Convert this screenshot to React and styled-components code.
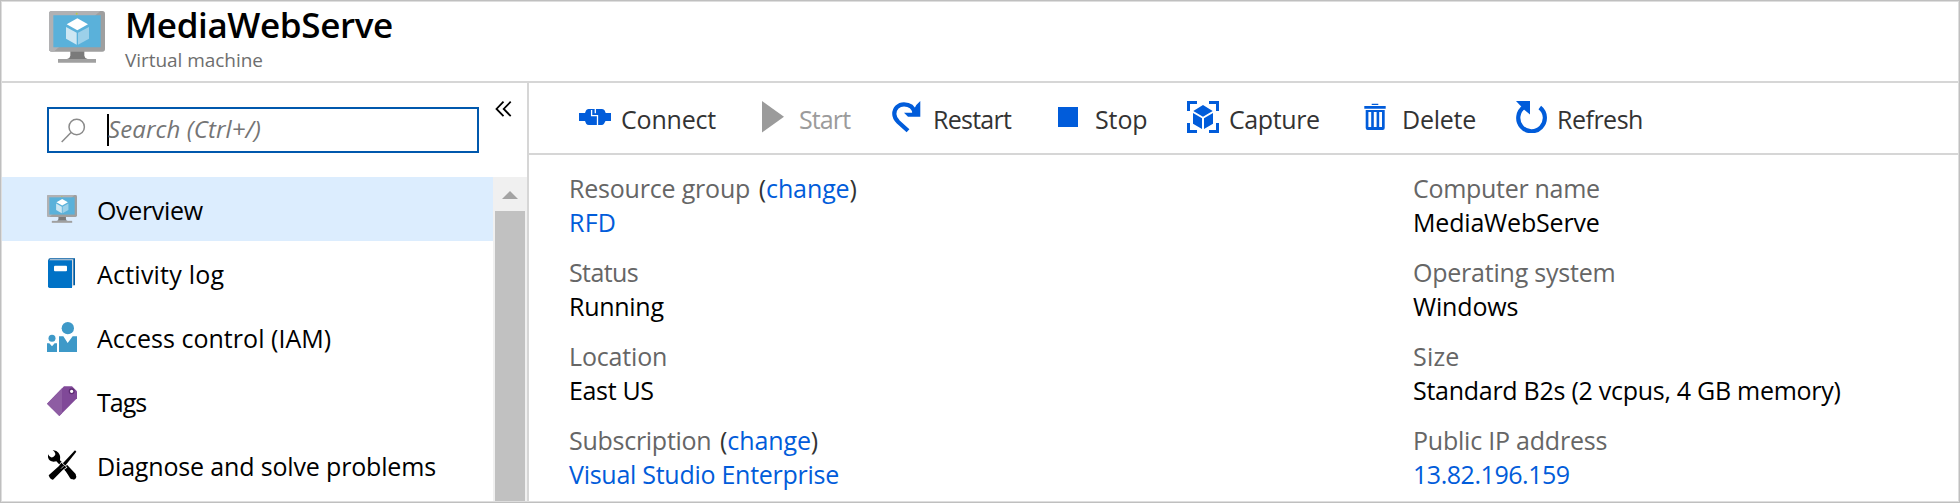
import React from 'react';
import styled, { createGlobalStyle } from 'styled-components';

const GlobalStyle = createGlobalStyle`
  *, *::before, *::after { box-sizing: border-box; }
  body { margin: 0; background: #fff; }
`;

const BLUE = '#015cda';
const LINE = '#d6d6d6';

const Frame = styled.div`
  display: flex;
  flex-direction: column;
  width: 1960px;
  height: 503px;
  overflow: hidden;
  border: 1px solid #bfbfbf;
  outline: 1px solid #dedede;
  outline-offset: -2px;
  padding: 1px;
  background: #fff;
  color: #000;
  font: 400 25px/34px "Open Sans", "Noto Sans", sans-serif;
  white-space: nowrap;
`;

const Text = styled.span`
  letter-spacing: ${(p) => p.$track || 0}px;
`;

const Header = styled.header`
  display: flex;
  align-items: flex-start;
  gap: 20px;
  flex: none;
  height: 81px;
  padding: 2px 0 0 47px;
  border-bottom: 2px solid ${LINE};
`;

const HeaderIcon = styled.div`
  margin-top: 7px;
  width: 56px;
  height: 52px;
`;

const Title = styled.h1`
  margin: 1px 0 0;
  font-size: 35px;
  font-weight: 600;
  line-height: 40px;
  letter-spacing: -0.38px;
`;

const Subtitle = styled.div`
  margin: 2px 0 0;
  color: #6e6e6e;
  font-size: 19px;
  line-height: 26px;
  letter-spacing: -0.05px;
`;

const Body = styled.div`
  display: flex;
  flex: 1;
  min-height: 0;
`;

const Sidebar = styled.aside`
  display: flex;
  flex-direction: column;
  width: 527px;
  border-right: 2px solid ${LINE};
`;

const SearchRow = styled.div`
  display: flex;
  align-items: flex-start;
  gap: 16px;
  flex: none;
  height: 94px;
  padding: 18px 0 0 45px;
`;

const SearchBox = styled.div`
  display: flex;
  align-items: center;
  width: 432px;
  height: 46px;
  margin-top: 6px;
  padding-left: 12px;
  border: 2px solid #0058ad;
`;

const Caret = styled.span`
  width: 2px;
  height: 32px;
  margin: 0 -1px 0 21px;
  background: #000;
`;

const Placeholder = styled.span`
  padding-bottom: 3px;
  color: #757575;
  font-size: 24px;
  font-style: italic;
  letter-spacing: 0.1px;
`;

const NavArea = styled.div`
  display: flex;
  flex: 1;
  min-height: 0;
`;

const NavList = styled.nav`
  flex: 1;
  overflow: hidden;
`;

const NavItem = styled.div`
  display: flex;
  align-items: center;
  gap: 20px;
  height: 64px;
  padding-left: 45px;
  background: ${(p) => (p.$active ? '#dcedfe' : 'transparent')};
  ${Text} { padding-top: 1px; }
`;

const Scrollbar = styled.div`
  display: flex;
  flex-direction: column;
  align-items: center;
  width: 34px;
  background: #f0f0f0;
`;

const ScrollArrow = styled.div`
  margin: 14px 0 12px;
  border: solid transparent;
  border-width: 0 8px 8px;
  border-bottom-color: #a3a3a3;
`;

const ScrollThumb = styled.div`
  flex: 1;
  width: 30px;
  margin-right: 1px;
  background: #c1c1c1;
`;

const Main = styled.main`
  flex: 1;
`;

const Toolbar = styled.div`
  display: grid;
  grid-template-columns: 178px 134px 162px 134px 173px 155px auto;
  align-items: start;
  height: 72px;
  padding: 18px 0 0 50px;
  border-bottom: 2px solid ${LINE};
`;

const ToolButton = styled.div`
  display: flex;
  gap: 10px;
  color: ${(p) => (p.$disabled ? '#9b9b9b' : '#333')};
  ${Text} { padding-top: 1px; }
`;

const Essentials = styled.div`
  display: grid;
  grid-template-columns: 844px auto;
  padding: 16px 0 0 40px;
`;

const Column = styled.div`
  display: flex;
  flex-direction: column;
  gap: 16px;
`;

const Label = styled.div`
  color: #666;
`;

const Paren = styled.span`
  margin-left: 2px;
  color: #333;
`;

const Link = styled.span`
  color: ${BLUE};
  letter-spacing: ${(p) => p.$track || 0}px;
`;

const Value = styled.div`
  color: ${(p) => (p.$link ? BLUE : '#000')};
`;

const Svg = styled.svg`
  display: block;
  flex: none;
`;

const VmIcon = ({ w, h }) => (
  <Svg width={w} height={h} viewBox="0 0 168 156" preserveAspectRatio="none">
    <path d="M64 120h42v14q1 8 10 10H54q9-2 10-10z" fill="#7a7a7a" />
    <path d="M27 144h114v11H27z" fill="#a0a0a0" />
    <rect width="168" height="122" rx="8" fill="#9f9f9f" />
    <path d="M8 0h146L14 122H8q-8 0-8-8V8q0-8 8-8z" fill="#b1b1b3" />
    <path d="M13 13h142v96H13z" fill="#5ab1da" />
    <circle cx="83" cy="8" r="3" fill="#b8c84a" />
    <path d="M85 22l32 18-32 18-32-18z" fill="#fff" />
    <path d="M51 48l32 17v36L51 83z" fill="#cde7f3" />
    <path d="M120 48L87 65v36l33-18z" fill="#9cd0e9" />
  </Svg>
);

const Icon90 = ({ children }) => (
  <Svg width="30" height="30" viewBox="0 0 90 90">{children}</Svg>
);

const LogIcon = () => (
  <Icon90>
    <path d="M9 1h75v81h-6V10H4V6q0-5 5-5z" fill="#005ba1" />
    <path d="M9 4h70v80l-6 4V9H6z" fill="#d5d9de" />
    <path d="M3 7h72v83H8q-5 0-5-5z" fill="#0072c6" />
    <rect x="21" y="23" width="39" height="17" rx="3" fill="#fff" />
  </Icon90>
);

const PeopleIcon = () => (
  <Icon90>
    <g fill="#3e99c8">
      <circle cx="62.5" cy="18.5" r="18.5" />
      <path d="M36 43h13l13 20 15-20h13v47H36z" />
      <circle cx="15" cy="49" r="10.5" />
      <path d="M0 64h7l8 9 8-9h7v26H0z" />
    </g>
  </Icon90>
);

const TagIcon = () => (
  <Icon90>
    <path d="M0 53L51 1h24l15 15v21L37 90z" fill="#804998" />
    <path d="M0 53L45 7v75l-8 8z" fill="#8e5da3" />
    <circle cx="74" cy="16" r="7" fill="#fff" stroke="#5f2c75" strokeWidth="4" />
  </Icon90>
);

const ToolsIcon = () => (
  <Icon90>
    <path d="M3 22q3 13 17 13l8-1 52 55q8-1 8-10L39 31q4-18-11-28l-11 -3q11 10 7 16-5 8-12 6-5-1-9-9z" />
    <path d="M50 53l10-9 26 28q3 9-6 15-8 2-11-3z" />
    <path d="M84 1l4 4-34 43-8-7z" stroke="#fff" strokeWidth="4" paintOrder="stroke" />
    <path d="M43 38l15 14-11 8L18 89q-8 1-13-13L36 48z" stroke="#fff" strokeWidth="4" paintOrder="stroke" />
    <path d="M42 56l9-9" stroke="#fff" strokeWidth="2" />
  </Icon90>
);

const Icon32 = ({ children }) => (
  <Svg width="32" height="32" viewBox="0 0 32 32" fill={BLUE}>{children}</Svg>
);

const ConnectIcon = () => (
  <Icon32>
    <path d="M0 12h6l1-2.500q.7-1.500 2.500-1.500h13.500q2 0 2.700 1.500l1 2.500H32v8h-5.500l-1.500 2.700q-.8 1.300-2.500 1.300H10q-2 0-2.800-1.300L6 20H0z" />
    <path d="M12.600 9v5.600h5.900V24M16.300 8v4.300" fill="none" stroke="#fff" strokeWidth="1.300" />
  </Icon32>
);

const StartIcon = () => (
  <Icon32><path d="M5 0l22 15.800L5 31.500z" fill="#9b9b9b" /></Icon32>
);

const RestartIcon = () => (
  <Icon32>
    <path d="M24 12C22.500 6 18 3.300 13 3.300 7.500 3.300 3.300 7.500 3.300 13c0 3.500 1.700 5.700 4 8l9.700 8.800" fill="none" stroke={BLUE} strokeWidth="4.200" />
    <path d="M25.300 4l4-4v15.700H17l-4-4h8z" />
  </Icon32>
);

const StopIcon = () => (
  <Icon32><path d="M5 6h20v20H5z" /></Icon32>
);

const CaptureIcon = () => (
  <Icon32>
    <path d="M0 0h10v3H3v7H0zM22 0h10v10h-3V3h-7zM0 22h3v7h7v3H0zM29 22h3v10H22v-3h7z" />
    <path d="M16 4l9.700 6-9.700 5.700L6.300 10zM6 12l9 5.300V28l-9-5.300zM26 12l-9 5.300V28l9-5.300z" />
  </Icon32>
);

const DeleteIcon = () => (
  <Icon32>
    <path d="M11.700 2.700h6.600V4h-6.600zM4.300 5h21.400v2.700H4.300z" />
    <path fillRule="evenodd" d="M5.700 9h19v18q0 2-2 2h-15q-2 0-2-2zM8.400 11v15h2.800V11zM13.800 11v15h2.800V11zM19.200 11v15H22V11z" />
  </Icon32>
);

const RefreshIcon = () => (
  <Icon32>
    <path d="M24.800 6.500A13.300 13.300 0 1 1 9 6" fill="none" stroke={BLUE} strokeWidth="4.200" />
    <path d="M1 0h14v13.500L9.500 9z" />
  </Icon32>
);

const SearchIcon = () => (
  <Svg width="25" height="25" viewBox="0 0 25 25" fill="none" stroke="#8a8a8a" strokeWidth="1.500">
    <circle cx="15.700" cy="9" r="7.700" />
    <path d="M10 14.500L.7 24" />
  </Svg>
);

const CollapseIcon = () => (
  <Svg width="17" height="16" viewBox="0 0 17 16" fill="none" stroke="#000" strokeWidth="1.800">
    <path d="M8.500 .7L1.500 7.900l7 7.200M15.700 .7l-7 7.200 7 7.200" />
  </Svg>
);

const nav = [
  ['Overview', -0.33, <VmIcon w="30" h="28" />],
  ['Activity log', 0.22, <LogIcon />],
  ['Access control (IAM)', 0.04, <PeopleIcon />],
  ['Tags', -1.0, <TagIcon />],
  ['Diagnose and solve problems', -0.16, <ToolsIcon />],
];

const tools = [
  ['Connect', -0.2, ConnectIcon],
  ['Start', -0.9, StartIcon],
  ['Restart', -0.74, RestartIcon],
  ['Stop', -0.1, StopIcon],
  ['Capture', -0.4, CaptureIcon],
  ['Delete', -0.25, DeleteIcon],
  ['Refresh', -0.5, RefreshIcon],
];

const columns = [
  [
    { label: 'Resource group', lt: -0.2, change: true, value: 'RFD', vt: 0.24, link: true },
    { label: 'Status', lt: -0.6, value: 'Running', vt: -0.28 },
    { label: 'Location', lt: -0.17, value: 'East US', vt: -0.34 },
    { label: 'Subscription', lt: -0.27, change: true, value: 'Visual Studio Enterprise', vt: -0.27, link: true },
  ],
  [
    { label: 'Computer name', lt: -0.3, value: 'MediaWebServe', vt: -0.18 },
    { label: 'Operating system', lt: -0.22, value: 'Windows', vt: -0.15 },
    { label: 'Size', lt: 0.19, value: 'Standard B2s (2 vcpus, 4 GB memory)', vt: -0.27 },
    { label: 'Public IP address', lt: -0.22, value: '13.82.196.159', vt: -0.46, link: true },
  ],
];

export default function App() {
  return (
    <Frame>
      <GlobalStyle />
      <Header>
        <HeaderIcon><VmIcon w="56" h="52" /></HeaderIcon>
        <div>
          <Title>MediaWebServe</Title>
          <Subtitle>Virtual machine</Subtitle>
        </div>
      </Header>
      <Body>
        <Sidebar>
          <SearchRow>
            <SearchBox>
              <SearchIcon />
              <Caret />
              <Placeholder>Search (Ctrl+/)</Placeholder>
            </SearchBox>
            <CollapseIcon />
          </SearchRow>
          <NavArea>
            <NavList>
              {nav.map(([label, track, icon], i) => (
                <NavItem key={label} $active={i === 0}>
                  {icon}
                  <Text $track={track}>{label}</Text>
                </NavItem>
              ))}
            </NavList>
            <Scrollbar>
              <ScrollArrow />
              <ScrollThumb />
            </Scrollbar>
          </NavArea>
        </Sidebar>
        <Main>
          <Toolbar>
            {tools.map(([label, track, Icon]) => (
              <ToolButton key={label} $disabled={label === 'Start'}>
                <Icon />
                <Text $track={track}>{label}</Text>
              </ToolButton>
            ))}
          </Toolbar>
          <Essentials>
            {columns.map((col, i) => (
              <Column key={i}>
                {col.map((f) => (
                  <div key={f.label}>
                    <Label>
                      <Text $track={f.lt}>{f.label}</Text>
                      {f.change && (
                        <Paren> (<Link $track={-0.1}>change</Link>)</Paren>
                      )}
                    </Label>
                    <Value $link={f.link}><Text $track={f.vt}>{f.value}</Text></Value>
                  </div>
                ))}
              </Column>
            ))}
          </Essentials>
        </Main>
      </Body>
    </Frame>
  );
}
